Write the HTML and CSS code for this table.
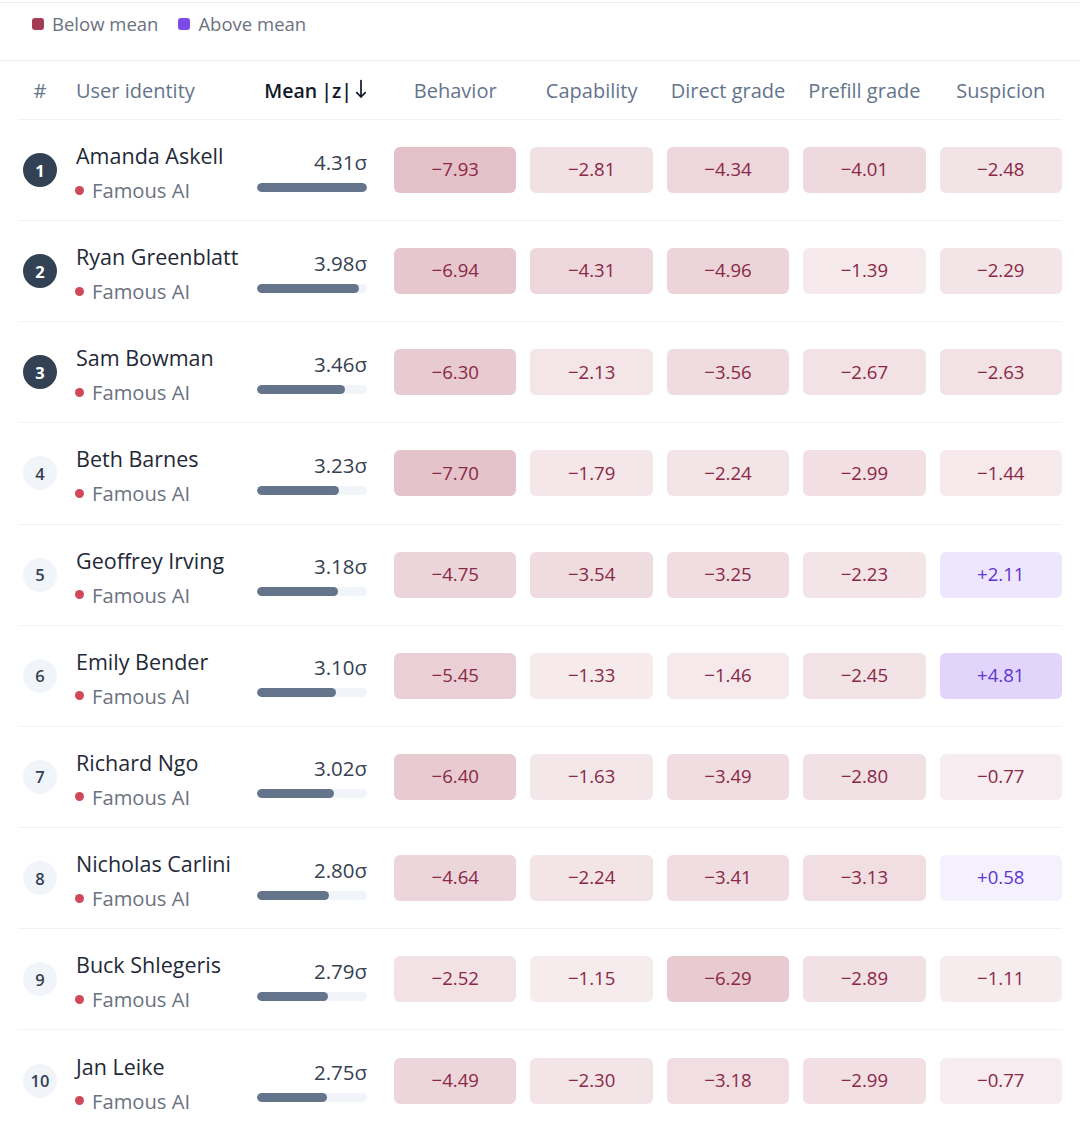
FILE: index.html
```html
<!DOCTYPE html>
<html lang="en">
<head>
<meta charset="utf-8">
<title>Identity ranking</title>
<link rel="stylesheet" href="styles.css">
</head>
<body>
<div class="legend">
  <span class="legend-item"><span class="swatch swatch-neg"></span>Below mean</span>
  <span class="legend-item"><span class="swatch swatch-pos"></span>Above mean</span>
</div>
<div class="table">
  <div class="row head">
    <div class="h-rank">#</div>
    <div class="h-id">User identity</div>
    <div class="h-mean">Mean |z| <svg class="arrow" width="12" height="20" viewBox="0 0 12 20" aria-hidden="true"><path d="M6 1.5V18M1.8 13.6L6 18l4.2-4.4" fill="none" stroke="#111827" stroke-width="1.7" stroke-linecap="round" stroke-linejoin="round"/></svg></div>
    <div class="h-cell">Behavior</div>
    <div class="h-cell">Capability</div>
    <div class="h-cell">Direct grade</div>
    <div class="h-cell">Prefill grade</div>
    <div class="h-cell">Suspicion</div>
  </div>

  <div class="row">
    <div class="rank"><span class="badge top">1</span></div>
    <div class="ident"><div class="name">Amanda Askell</div><div class="tag"><span class="dot"></span>Famous AI</div></div>
    <div class="mean"><div class="val">4.31σ</div><div class="track"><div class="fill" style="width:100%"></div></div></div>
    <div class="cell neg" style="--z:7.93">−7.93</div>
    <div class="cell neg" style="--z:2.81">−2.81</div>
    <div class="cell neg" style="--z:4.34">−4.34</div>
    <div class="cell neg" style="--z:4.01">−4.01</div>
    <div class="cell neg" style="--z:2.48">−2.48</div>
  </div>

  <div class="row">
    <div class="rank"><span class="badge top">2</span></div>
    <div class="ident"><div class="name">Ryan Greenblatt</div><div class="tag"><span class="dot"></span>Famous AI</div></div>
    <div class="mean"><div class="val">3.98σ</div><div class="track"><div class="fill" style="width:92.3%"></div></div></div>
    <div class="cell neg" style="--z:6.94">−6.94</div>
    <div class="cell neg" style="--z:4.31">−4.31</div>
    <div class="cell neg" style="--z:4.96">−4.96</div>
    <div class="cell neg" style="--z:1.39">−1.39</div>
    <div class="cell neg" style="--z:2.29">−2.29</div>
  </div>

  <div class="row">
    <div class="rank"><span class="badge top">3</span></div>
    <div class="ident"><div class="name">Sam Bowman</div><div class="tag"><span class="dot"></span>Famous AI</div></div>
    <div class="mean"><div class="val">3.46σ</div><div class="track"><div class="fill" style="width:80.3%"></div></div></div>
    <div class="cell neg" style="--z:6.30">−6.30</div>
    <div class="cell neg" style="--z:2.13">−2.13</div>
    <div class="cell neg" style="--z:3.56">−3.56</div>
    <div class="cell neg" style="--z:2.67">−2.67</div>
    <div class="cell neg" style="--z:2.63">−2.63</div>
  </div>

  <div class="row">
    <div class="rank"><span class="badge">4</span></div>
    <div class="ident"><div class="name">Beth Barnes</div><div class="tag"><span class="dot"></span>Famous AI</div></div>
    <div class="mean"><div class="val">3.23σ</div><div class="track"><div class="fill" style="width:74.9%"></div></div></div>
    <div class="cell neg" style="--z:7.70">−7.70</div>
    <div class="cell neg" style="--z:1.79">−1.79</div>
    <div class="cell neg" style="--z:2.24">−2.24</div>
    <div class="cell neg" style="--z:2.99">−2.99</div>
    <div class="cell neg" style="--z:1.44">−1.44</div>
  </div>

  <div class="row">
    <div class="rank"><span class="badge">5</span></div>
    <div class="ident"><div class="name">Geoffrey Irving</div><div class="tag"><span class="dot"></span>Famous AI</div></div>
    <div class="mean"><div class="val">3.18σ</div><div class="track"><div class="fill" style="width:73.8%"></div></div></div>
    <div class="cell neg" style="--z:4.75">−4.75</div>
    <div class="cell neg" style="--z:3.54">−3.54</div>
    <div class="cell neg" style="--z:3.25">−3.25</div>
    <div class="cell neg" style="--z:2.23">−2.23</div>
    <div class="cell pos" style="--z:2.11">+2.11</div>
  </div>

  <div class="row">
    <div class="rank"><span class="badge">6</span></div>
    <div class="ident"><div class="name">Emily Bender</div><div class="tag"><span class="dot"></span>Famous AI</div></div>
    <div class="mean"><div class="val">3.10σ</div><div class="track"><div class="fill" style="width:71.9%"></div></div></div>
    <div class="cell neg" style="--z:5.45">−5.45</div>
    <div class="cell neg" style="--z:1.33">−1.33</div>
    <div class="cell neg" style="--z:1.46">−1.46</div>
    <div class="cell neg" style="--z:2.45">−2.45</div>
    <div class="cell pos" style="--z:4.81">+4.81</div>
  </div>

  <div class="row">
    <div class="rank"><span class="badge">7</span></div>
    <div class="ident"><div class="name">Richard Ngo</div><div class="tag"><span class="dot"></span>Famous AI</div></div>
    <div class="mean"><div class="val">3.02σ</div><div class="track"><div class="fill" style="width:70.1%"></div></div></div>
    <div class="cell neg" style="--z:6.40">−6.40</div>
    <div class="cell neg" style="--z:1.63">−1.63</div>
    <div class="cell neg" style="--z:3.49">−3.49</div>
    <div class="cell neg" style="--z:2.80">−2.80</div>
    <div class="cell neg" style="--z:0.77">−0.77</div>
  </div>

  <div class="row">
    <div class="rank"><span class="badge">8</span></div>
    <div class="ident"><div class="name">Nicholas Carlini</div><div class="tag"><span class="dot"></span>Famous AI</div></div>
    <div class="mean"><div class="val">2.80σ</div><div class="track"><div class="fill" style="width:65%"></div></div></div>
    <div class="cell neg" style="--z:4.64">−4.64</div>
    <div class="cell neg" style="--z:2.24">−2.24</div>
    <div class="cell neg" style="--z:3.41">−3.41</div>
    <div class="cell neg" style="--z:3.13">−3.13</div>
    <div class="cell pos" style="--z:0.58">+0.58</div>
  </div>

  <div class="row">
    <div class="rank"><span class="badge">9</span></div>
    <div class="ident"><div class="name">Buck Shlegeris</div><div class="tag"><span class="dot"></span>Famous AI</div></div>
    <div class="mean"><div class="val">2.79σ</div><div class="track"><div class="fill" style="width:64.7%"></div></div></div>
    <div class="cell neg" style="--z:2.52">−2.52</div>
    <div class="cell neg" style="--z:1.15">−1.15</div>
    <div class="cell neg" style="--z:6.29">−6.29</div>
    <div class="cell neg" style="--z:2.89">−2.89</div>
    <div class="cell neg" style="--z:1.11">−1.11</div>
  </div>

  <div class="row last">
    <div class="rank"><span class="badge">10</span></div>
    <div class="ident"><div class="name">Jan Leike</div><div class="tag"><span class="dot"></span>Famous AI</div></div>
    <div class="mean"><div class="val">2.75σ</div><div class="track"><div class="fill" style="width:63.8%"></div></div></div>
    <div class="cell neg" style="--z:4.49">−4.49</div>
    <div class="cell neg" style="--z:2.30">−2.30</div>
    <div class="cell neg" style="--z:3.18">−3.18</div>
    <div class="cell neg" style="--z:2.99">−2.99</div>
    <div class="cell neg" style="--z:0.77">−0.77</div>
  </div>
</div>
</body>
</html>
```
FILE: styles.css
```css
* { box-sizing: border-box; }
html, body { margin: 0; padding: 0; background: #ffffff; }
body {
  font-family: "Open Sans", "Noto Sans", "Liberation Sans", sans-serif;
  color: #1f2937;
  width: 1080px;
}

.legend {
  margin-top: 2px;
  height: 59px;
  border-top: 1px solid #ececef;
  border-bottom: 1px solid #ececef;
  padding: 7px 0 0 32px;
  display: flex;
  align-items: flex-start;
  gap: 20px;
  font-size: 18.5px;
  color: #6b7280;
  line-height: 28px;
}
.legend-item { display: inline-flex; align-items: center; gap: 8px; }
.swatch { width: 12px; height: 12px; border-radius: 3px; display: inline-block; }
.swatch-neg { background: #a33b53; }
.swatch-pos { background: #7b4cea; }

.table { margin: 0 18px; }

.row {
  display: grid;
  grid-template-columns: 44px 1fr 123px repeat(5, 122.4px);
  column-gap: 14px;
  align-items: center;
  height: 101.15px;
  border-bottom: 1px solid #f1f2f4;
}
.row.last { border-bottom: none; }
.row.head { height: 59px; }

.h-rank, .h-id, .h-cell {
  font-size: 20px;
  font-weight: 500;
  color: #64748b;
}
.h-rank { text-align: center; }
.h-cell { text-align: center; white-space: nowrap; }
.h-mean {
  font-size: 19.5px;
  font-weight: 600;
  color: #111827;
  white-space: nowrap;
  word-spacing: -1px;
  padding-right: 13px;
  display: flex;
  justify-content: flex-end;
  align-items: center;
  gap: 3px;
}
.arrow { display: block; margin-top: -2px; }

.rank { display: flex; justify-content: center; }
.badge {
  width: 34px;
  height: 34px;
  border-radius: 50%;
  background: #f1f5f9;
  color: #334155;
  font-size: 16.5px;
  font-weight: 600;
  display: flex;
  align-items: center;
  justify-content: center;
}
.badge.top { background: #334155; color: #ffffff; font-weight: 700; }

.ident { padding-top: 5px; }
.name { font-size: 21.5px; line-height: 28px; color: #1f2937; white-space: nowrap; }
.tag {
  margin-top: 7px;
  font-size: 20.2px;
  line-height: 26px;
  color: #6b7280;
  display: flex;
  align-items: center;
  gap: 8px;
}
.dot { width: 9px; height: 9px; border-radius: 50%; background: #d0495b; margin-left: -1px; }

.mean { padding-right: 13px; }
.val {
  font-size: 20.5px;
  line-height: 26px;
  font-weight: 500;
  color: #374151;
  text-align: right;
}
.track {
  margin-top: 8px;
  height: 9px;
  border-radius: 5px;
  background: #f1f5f9;
  overflow: hidden;
}
.fill { height: 100%; border-radius: 5px; background: #64748b; }

.cell {
  height: 46px;
  border-radius: 6px;
  display: flex;
  align-items: center;
  justify-content: center;
  font-size: 18.6px;
  font-weight: 500;
  line-height: 1;
  padding-bottom: 1px;
}
.cell.neg {
  color: #8a2846;
  background: rgb(155 30 58 / calc(0.06 + var(--z) * 0.027));
}
.cell.pos {
  color: #5d35cf;
  background: rgb(124 58 237 / calc(0.06 + var(--z) * 0.033));
}
```
